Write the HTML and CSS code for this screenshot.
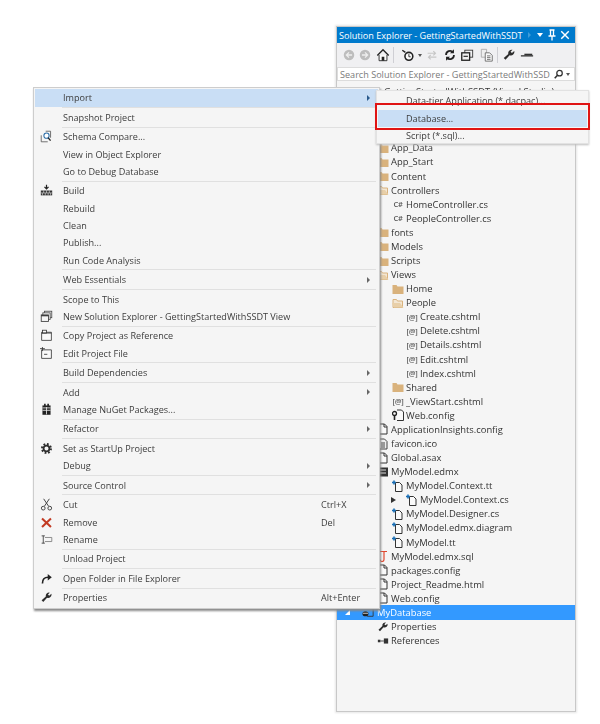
FILE: index.html
```html
<!DOCTYPE html>
<html lang="en">
<head>
<meta charset="utf-8">
<title>Import database into SSDT project</title>
<link rel="stylesheet" href="styles.css">
</head>
<body>
<svg class="sprite" xmlns="http://www.w3.org/2000/svg">
  <symbol id="page" viewBox="0 0 12 12"><path d="M2.500 1h5l2.500 2.500V11H2.500z" fill="#fafafa" stroke="#333"/><path d="M7 1v3h3" fill="none" stroke="#333"/></symbol>
  <symbol id="linked" viewBox="0 0 12 12"><path d="M3.500 2.500h4l2.500 2.500V11.500H3.500z" fill="#fafafa" stroke="#333"/><path d="M0 2.500h4M2 .5v4" stroke="#1b6fb5" stroke-width="1.600"/></symbol>
  <symbol id="folder" viewBox="0 0 12 12"><path d="M.5 2h4l1 1.500h6V11H.5z" fill="#d9b27c"/></symbol>
  <symbol id="open" viewBox="0 0 12 12"><path d="M1 2.500h3.500l1 1.500H10.500V10.500H1z" fill="#f3e6d2" stroke="#d9b27c"/><path d="M0 6h8l3.500 4.500H2z" fill="#e8cfa8"/></symbol>
  <symbol id="webcfg" viewBox="0 0 12 12"><path d="M5 1h4.500l2 2v8.500H5" fill="#fafafa" stroke="#333"/><circle cx="2.500" cy="4.500" r="2" fill="none" stroke="#222" stroke-width="1.300"/><path d="M2.500 6v5" stroke="#222" stroke-width="1.600"/></symbol>
  <symbol id="sql" viewBox="0 0 12 12"><path d="M2 1.500h8M7 1.500v8a2 2 0 0 1-4 0" fill="none" stroke="#e0472e" stroke-width="1.200"/></symbol>
  <symbol id="ico" viewBox="0 0 12 12"><path d="M2.500 1h5l2.500 2.500V11H2.500z" fill="#eee" stroke="#444"/><path d="M4 5h4M4 7h4M4 9h4" stroke="#444"/></symbol>
  <symbol id="edmx" viewBox="0 0 12 12"><rect x="1" y="1.500" width="10" height="9" fill="#333"/><path d="M3 4h6M3 7h6" stroke="#ddd"/></symbol>
  <symbol id="db" viewBox="0 0 14 12"><path d="M4 1h9v10H6" fill="none" stroke="#333"/><ellipse cx="4" cy="8" rx="3.500" ry="3" fill="#222"/><path d="M1 7.500h6" stroke="#ddd"/></symbol>
  <symbol id="refs" viewBox="0 0 14 12"><rect x="1" y="4.500" width="3" height="3" fill="#333"/><path d="M4 6h4" stroke="#333"/><rect x="8" y="3" width="5" height="6" fill="#333"/></symbol>
  <symbol id="wrench" viewBox="0 0 16 16"><path d="M14 3.500a4 4 0 0 1-5.300 4.800L4 13.500 2 11.500l5.200-4.700A4 4 0 0 1 12 2L9.800 4.300l1.500 1.500z" fill="#2d2d2d"/></symbol>
  <symbol id="compare" viewBox="0 0 16 16"><path d="M7 1.500h6v8M1.500 6.500v8h8" fill="none" stroke="#555"/><circle cx="8" cy="7" r="3.200" fill="#fff" stroke="#2d6ea8" stroke-width="1.300"/><path d="M10 9.500l3 3.500" stroke="#222" stroke-width="1.600"/></symbol>
  <symbol id="build" viewBox="0 0 16 16"><path d="M8 1v4M5.500 3.500L8 6l2.500-2.500" fill="none" stroke="#222" stroke-width="1.500"/><path d="M1 8h14v6H1z" fill="#333"/><path d="M1 11h14M4.500 8v3M8 8v3M11.500 8v3M3 11v3M6.500 11v3M10 11v3M13 11v3" stroke="#eee" stroke-width=".7"/></symbol>
  <symbol id="stack" viewBox="0 0 16 16"><rect x="5.500" y="1.500" width="9" height="8" fill="none" stroke="#444"/><rect x="3.500" y="3.500" width="9" height="8" fill="#f5f5f5" stroke="#444"/><rect x="1.500" y="6" width="9" height="8" fill="#f5f5f5" stroke="#333"/><path d="M1.500 7h9" stroke="#333" stroke-width="1.500"/></symbol>
  <symbol id="copyref" viewBox="0 0 16 16"><path d="M2 4h12v10H2z" fill="#fafafa" stroke="#333"/><rect x="3" y="1.500" width="5" height="3.500" fill="#fafafa" stroke="#333"/><path d="M2 5h12" stroke="#333"/></symbol>
  <symbol id="editfile" viewBox="0 0 16 16"><path d="M2 3.500h12V14H2z" fill="#fafafa" stroke="#333"/><path d="M0 2h6M3 0v5" stroke="#333"/><path d="M5 9h4" stroke="#333"/></symbol>
  <symbol id="nuget" viewBox="0 0 16 16"><path d="M3 3h10v11.500H3z" fill="#222"/><path d="M5 1h2v3H5zM9 1h2v3H9z" fill="#222"/><path d="M3 9h10M8 5v9M3 6h10" stroke="#eee"/></symbol>
  <symbol id="gear" viewBox="0 0 16 16"><circle cx="8" cy="8" r="5.500" fill="none" stroke="#2d2d2d" stroke-width="2.500" stroke-dasharray="2.200 2.100"/><circle cx="8" cy="8" r="3.600" fill="none" stroke="#2d2d2d" stroke-width="2.200"/></symbol>
  <symbol id="cut" viewBox="0 0 16 16"><path d="M4.500 1l6 9M11.500 1l-6 9" stroke="#444" stroke-width="1.200"/><circle cx="4" cy="12.500" r="2.300" fill="none" stroke="#444" stroke-width="1.200"/><circle cx="12" cy="12.500" r="2.300" fill="none" stroke="#444" stroke-width="1.200"/></symbol>
  <symbol id="remove" viewBox="0 0 16 16"><path d="M2.500 3l11 10.500M13.500 3l-11 10.500" stroke="#c23a22" stroke-width="2.500"/></symbol>
  <symbol id="rename" viewBox="0 0 16 16"><path d="M2 3.500h4M2 12.500h4M4 3.500v9" stroke="#333"/><path d="M6 5.500h8.500v5H6" fill="none" stroke="#777"/></symbol>
  <symbol id="openf" viewBox="0 0 16 16"><path d="M3 14c0-5 2.500-7.500 7-7.500" fill="none" stroke="#222" stroke-width="2"/><path d="M9.500 2.500l5 4-5 4z" fill="#222"/></symbol>
  <symbol id="back" viewBox="0 0 16 16"><circle cx="8" cy="8" r="6" fill="#bdbdbd"/><path d="M11.500 8h-6M8 5L5 8l3 3" fill="none" stroke="#eee" stroke-width="1.500"/></symbol>
  <symbol id="forward" viewBox="0 0 16 16"><circle cx="8" cy="8" r="6" fill="#bdbdbd"/><path d="M4.500 8h6M8 5l3 3-3 3" fill="none" stroke="#eee" stroke-width="1.500"/></symbol>
  <symbol id="home" viewBox="0 0 16 16"><path d="M1.500 8.500L8 2l6.500 6.500" fill="none" stroke="#222" stroke-width="1.500"/><path d="M3.500 8v6.500h9V8" fill="#fafafa" stroke="#222"/><rect x="6.500" y="10" width="3" height="4.500" fill="#222"/></symbol>
  <symbol id="history" viewBox="0 0 16 16"><circle cx="9" cy="9.500" r="4.500" fill="#fafafa" stroke="#222" stroke-width="1.800"/><path d="M9 7v3h2" fill="none" stroke="#222"/><path d="M1.500 2.500L5 5" stroke="#222" stroke-width="1.500"/></symbol>
  <symbol id="sync" viewBox="0 0 16 16"><path d="M3 6h9M9.500 3.500L12 6 9.500 8.500M13 10.500H4M6.500 8L4 10.500 6.500 13" fill="none" stroke="#c6c6c6" stroke-width="1.300"/></symbol>
  <symbol id="refresh" viewBox="0 0 16 16"><path d="M3.500 8a4.500 4.500 0 0 1 8-3M12.500 8a4.500 4.500 0 0 1-8 3" fill="none" stroke="#222" stroke-width="2"/><path d="M12.500 1.500v4.500H8zM3.500 14.500V10H8z" fill="#222"/></symbol>
  <symbol id="collapse" viewBox="0 0 16 16"><rect x="5.500" y="2.500" width="9" height="8" fill="none" stroke="#333"/><rect x="2" y="5.500" width="9" height="8.500" fill="#f0f0f0" stroke="#222" stroke-width="1.500"/><path d="M4 9.500h5" stroke="#222" stroke-width="1.300"/></symbol>
  <symbol id="showall" viewBox="0 0 16 16"><path d="M1.500 1.500h6v9h-6z" fill="#eee" stroke="#aaa"/><path d="M6 5.500h5l3 3v6.500H6z" fill="#fafafa" stroke="#666"/><path d="M8 9h4M8 11h4M8 13h4" stroke="#666"/></symbol>
  <symbol id="dash" viewBox="0 0 16 16"><path d="M1 9h14" stroke="#333" stroke-width="1.500"/><rect x="5" y="6.500" width="9" height="2" fill="#333"/></symbol>
  <symbol id="search" viewBox="0 0 16 16"><circle cx="9.500" cy="6" r="4" fill="none" stroke="#333" stroke-width="1.800"/><path d="M6.500 9l-4 4.500" stroke="#333" stroke-width="2.200"/></symbol>
  <symbol id="pin" viewBox="0 0 12 12"><path d="M3.500 1h5M4.500 1v5.500M7.500 1v5.500M2.500 7h7M6 7v4.500" fill="none" stroke="#fff" stroke-width="1.300"/></symbol>
  <symbol id="close" viewBox="0 0 12 12"><path d="M1.500 1.500l9 9M10.500 1.500l-9 9" stroke="#fff" stroke-width="1.700"/></symbol>
</svg>

<main class="stage">
  <section class="panel">
    <header class="title">
      <span class="title-text">Solution Explorer - GettingStartedWithSSDT</span>
      <i class="tri-faded"></i>
      <i class="tri-down white"></i>
      <svg class="title-pin"><use href="#pin"/></svg>
      <svg class="title-close"><use href="#close"/></svg>
    </header>
    <div class="toolbar">
      <svg class="tb"><use href="#back"/></svg>
      <svg class="tb"><use href="#forward"/></svg>
      <svg class="tb gap2"><use href="#home"/></svg>
      <i class="tb-sep"></i>
      <svg class="tb gap6"><use href="#history"/></svg>
      <i class="tri-down small"></i>
      <svg class="tb gap2"><use href="#sync"/></svg>
      <svg class="tb gap2"><use href="#refresh"/></svg>
      <svg class="tb gap1"><use href="#collapse"/></svg>
      <svg class="tb gap4"><use href="#showall"/></svg>
      <i class="tb-sep"></i>
      <svg class="tb gap3"><use href="#wrench"/></svg>
      <svg class="tb gap2"><use href="#dash"/></svg>
    </div>
    <div class="search">
      <span class="search-text">Search Solution Explorer - GettingStartedWithSSD</span>
      <svg class="search-icon"><use href="#search"/></svg>
      <i class="tri-down small"></i>
    </div>
    <ul class="tree">
      <li class="row l0 clipped"><span>GettingStartedWithSSDT (Visual Studio)</span></li>
      <li class="spacer"></li>
      <li class="row l0"><svg class="ti"><use href="#folder"/></svg><span>App_Data</span></li>
      <li class="row l0"><svg class="ti"><use href="#folder"/></svg><span>App_Start</span></li>
      <li class="row l0"><svg class="ti"><use href="#folder"/></svg><span>Content</span></li>
      <li class="row l0"><svg class="ti"><use href="#open"/></svg><span>Controllers</span></li>
      <li class="row l1"><b class="tt cs">C#</b><span>HomeController.cs</span></li>
      <li class="row l1"><b class="tt cs">C#</b><span>PeopleController.cs</span></li>
      <li class="row l0"><svg class="ti"><use href="#folder"/></svg><span>fonts</span></li>
      <li class="row l0"><svg class="ti"><use href="#folder"/></svg><span>Models</span></li>
      <li class="row l0"><svg class="ti"><use href="#folder"/></svg><span>Scripts</span></li>
      <li class="row l0"><svg class="ti"><use href="#open"/></svg><span>Views</span></li>
      <li class="row l1"><svg class="ti"><use href="#folder"/></svg><span>Home</span></li>
      <li class="row l1"><svg class="ti"><use href="#open"/></svg><span>People</span></li>
      <li class="row l2"><b class="tt">[@]</b><span>Create.cshtml</span></li>
      <li class="row l2"><b class="tt">[@]</b><span>Delete.cshtml</span></li>
      <li class="row l2"><b class="tt">[@]</b><span>Details.cshtml</span></li>
      <li class="row l2"><b class="tt">[@]</b><span>Edit.cshtml</span></li>
      <li class="row l2"><b class="tt">[@]</b><span>Index.cshtml</span></li>
      <li class="row l1"><svg class="ti"><use href="#folder"/></svg><span>Shared</span></li>
      <li class="row l1"><b class="tt">[@]</b><span>_ViewStart.cshtml</span></li>
      <li class="row l1"><svg class="ti"><use href="#webcfg"/></svg><span>Web.config</span></li>
      <li class="row l0"><svg class="ti"><use href="#page"/></svg><span>ApplicationInsights.config</span></li>
      <li class="row l0"><svg class="ti"><use href="#ico"/></svg><span>favicon.ico</span></li>
      <li class="row l0"><svg class="ti"><use href="#page"/></svg><span>Global.asax</span></li>
      <li class="row l0"><svg class="ti"><use href="#edmx"/></svg><span>MyModel.edmx</span></li>
      <li class="row l1"><svg class="ti"><use href="#linked"/></svg><span>MyModel.Context.tt</span></li>
      <li class="row l2"><i class="expander"></i><svg class="ti"><use href="#linked"/></svg><span>MyModel.Context.cs</span></li>
      <li class="row l1"><svg class="ti"><use href="#linked"/></svg><span>MyModel.Designer.cs</span></li>
      <li class="row l1"><svg class="ti"><use href="#linked"/></svg><span>MyModel.edmx.diagram</span></li>
      <li class="row l1"><svg class="ti"><use href="#linked"/></svg><span>MyModel.tt</span></li>
      <li class="row l0"><svg class="ti"><use href="#sql"/></svg><span>MyModel.edmx.sql</span></li>
      <li class="row l0"><svg class="ti"><use href="#page"/></svg><span>packages.config</span></li>
      <li class="row l0"><svg class="ti"><use href="#page"/></svg><span>Project_Readme.html</span></li>
      <li class="row l0"><svg class="ti"><use href="#page"/></svg><span>Web.config</span></li>
      <li class="row project selected"><i class="collapser"></i><svg class="ti wide"><use href="#db"/></svg><span>MyDatabase</span></li>
      <li class="row l0"><svg class="ti"><use href="#wrench"/></svg><span>Properties</span></li>
      <li class="row l0"><svg class="ti"><use href="#refs"/></svg><span>References</span></li>
    </ul>
  </section>

  <nav class="menu context">
    <div class="item active"><span class="label">Import</span><i class="arrow dark"></i></div>
    <i class="sep"></i>
    <div class="item"><span class="label">Snapshot Project</span></div>
    <i class="sep"></i>
    <div class="item"><svg class="mi"><use href="#compare"/></svg><span class="label">Schema Compare...</span></div>
    <div class="item"><span class="label">View in Object Explorer</span></div>
    <div class="item"><span class="label">Go to Debug Database</span></div>
    <i class="sep"></i>
    <div class="item"><svg class="mi"><use href="#build"/></svg><span class="label">Build</span></div>
    <div class="item"><span class="label">Rebuild</span></div>
    <div class="item"><span class="label">Clean</span></div>
    <div class="item"><span class="label">Publish...</span></div>
    <div class="item"><span class="label">Run Code Analysis</span></div>
    <i class="sep"></i>
    <div class="item"><span class="label">Web Essentials</span><i class="arrow"></i></div>
    <i class="sep"></i>
    <div class="item"><span class="label">Scope to This</span></div>
    <div class="item"><svg class="mi"><use href="#stack"/></svg><span class="label">New Solution Explorer - GettingStartedWithSSDT View</span></div>
    <i class="sep"></i>
    <div class="item"><svg class="mi"><use href="#copyref"/></svg><span class="label">Copy Project as Reference</span></div>
    <div class="item"><svg class="mi"><use href="#editfile"/></svg><span class="label">Edit Project File</span></div>
    <i class="sep"></i>
    <div class="item"><span class="label">Build Dependencies</span><i class="arrow"></i></div>
    <i class="sep"></i>
    <div class="item"><span class="label">Add</span><i class="arrow"></i></div>
    <div class="item"><svg class="mi"><use href="#nuget"/></svg><span class="label">Manage NuGet Packages...</span></div>
    <i class="sep"></i>
    <div class="item"><span class="label">Refactor</span><i class="arrow"></i></div>
    <i class="sep"></i>
    <div class="item"><svg class="mi"><use href="#gear"/></svg><span class="label">Set as StartUp Project</span></div>
    <div class="item"><span class="label">Debug</span><i class="arrow"></i></div>
    <i class="sep"></i>
    <div class="item"><span class="label">Source Control</span><i class="arrow"></i></div>
    <i class="sep"></i>
    <div class="item"><svg class="mi"><use href="#cut"/></svg><span class="label">Cut</span><span class="shortcut">Ctrl+X</span></div>
    <div class="item"><svg class="mi"><use href="#remove"/></svg><span class="label">Remove</span><span class="shortcut">Del</span></div>
    <div class="item"><svg class="mi"><use href="#rename"/></svg><span class="label">Rename</span></div>
    <i class="sep"></i>
    <div class="item"><span class="label">Unload Project</span></div>
    <i class="sep"></i>
    <div class="item"><svg class="mi"><use href="#openf"/></svg><span class="label">Open Folder in File Explorer</span></div>
    <i class="sep"></i>
    <div class="item"><svg class="mi"><use href="#wrench"/></svg><span class="label">Properties</span><span class="shortcut">Alt+Enter</span></div>
  </nav>

  <nav class="menu submenu">
    <div class="sub-item"><span>Data-tier Application (*.dacpac)...</span></div>
    <div class="sub-item active"><span>Database...</span></div>
    <div class="sub-item"><span>Script (*.sql)...</span></div>
  </nav>
  <div class="callout"></div>
</main>
</body>
</html>
```

FILE: styles.css
```css
* { box-sizing: border-box; }
html, body { margin: 0; padding: 0; background: #fff; }
body { font-family: "Open Sans", "Noto Sans", sans-serif; font-size: 9.100px; color: #3c3c3c; }
.sprite { position: absolute; width: 0; height: 0; }
i { display: block; font-style: normal; }

.stage { position: relative; width: 600px; height: 724px; overflow: hidden; filter: blur(.35px); }

/* Solution Explorer window */
.panel { position: absolute; left: 336px; top: 26px; width: 240px; height: 686px; background: #f5f5f5; border: 1px solid #c8c8c8; box-shadow: 0 0 2px 1px #e6e6e6; display: flex; flex-direction: column; }
.title { height: 16px; flex: none; background: #007acc; color: #fff; display: flex; align-items: center; padding-left: 2px; font-size: 9.100px; }
.title-text { width: 189px; flex: none; white-space: nowrap; }
.tri-faded { width: 0; height: 0; border-left: 3px solid #3d9bd9; border-top: 3px solid transparent; border-bottom: 3px solid transparent; }
.tri-down { width: 0; height: 0; border-left: 3.500px solid transparent; border-right: 3.500px solid transparent; border-top: 4px solid #333; }
.tri-down.white { border-top-color: #fff; margin-left: 5.500px; }
.tri-down.small { border-left-width: 2.500px; border-right-width: 2.500px; border-top-width: 3px; border-top-color: #555; margin-left: 2px; }
.title-pin { width: 12px; height: 12px; margin-left: 3.500px; }
.title-close { width: 10px; height: 10px; margin-left: 2px; }

.toolbar { height: 24px; flex: none; background: #f0f0f2; display: flex; align-items: center; padding-left: 4px; }
.tb { width: 14px; height: 14px; flex: none; margin: 0 1px; }
.tb.gap1 { margin-left: 2px; }
.tb.gap2 { margin-left: 3px; }
.tb.gap3 { margin-left: 4px; }
.tb.gap4 { margin-left: 5px; }
.tb.gap6 { margin-left: 7px; }
.tb-sep { width: 1px; height: 16px; margin-left: 2px; background: #cfcfd4; }

.search { height: 14px; flex: none; background: #fff; border: 1px solid #dcdcdc; display: flex; align-items: center; padding-left: 2px; color: #7a7a7a; font-size: 9.100px; }
.search-text { width: 213px; flex: none; white-space: nowrap; }
.search-icon { width: 11px; height: 11px; }

.tree { list-style: none; margin: 0; padding: 3.500px 0 0; flex: 1; overflow: hidden; }
.row { height: 14.090px; display: flex; align-items: center; white-space: nowrap; color: #333; font-size: 9.400px; }
.l0 { padding-left: 40px; }
.l1 { padding-left: 55px; }
.l2 { padding-left: 69px; }
.project { padding-left: 8px; }
.spacer { height: 42.270px; }
.clipped { padding-left: 47px; }
.ti { width: 12px; height: 12px; flex: none; margin-right: 2px; }
.ti.wide { margin-left: 12px; margin-right: 3px; }
.tt { width: 12px; flex: none; margin-right: 2px; font-size: 7.500px; font-weight: 600; color: #555; text-align: center; letter-spacing: -.2px; }
.selected { background: #3399ff; color: #fff; }
.expander { width: 0; height: 0; margin-left: -15px; margin-right: 10px; border-left: 5px solid #333; border-top: 3.500px solid transparent; border-bottom: 3.500px solid transparent; }
.collapser { width: 0; height: 0; margin-left: 0; border-right: 5px solid #fff; border-top: 5px solid transparent; }

/* Menus */
.menu { position: absolute; background: #f5f5f5; border: 1px solid #cdcdcd; }
.context { left: 33px; top: 87px; width: 347px; padding: 1.300px 1px; box-shadow: 1px 2px 2px #8a8a8a; }
.item { height: 17.300px; display: grid; grid-template-columns: 28px 1fr 44px 13px; align-items: center; white-space: nowrap; }
.mi { grid-column: 1; width: 13px; height: 13px; margin-left: 4.500px; }
.label { grid-column: 2; grid-row: 1; }
.shortcut { grid-column: 3; grid-row: 1; }
.arrow { grid-column: 4; grid-row: 1; width: 0; height: 0; margin-left: 2px; border-left: 3.500px solid #666; border-top: 3px solid transparent; border-bottom: 3px solid transparent; }
.arrow.dark { border-left-color: #2a5a8c; }
.active { background: #c9def5; }
.sep { height: 1px; margin: .6px 2px .6px 27px; background: #e0e0e0; }

.submenu { left: 376px; top: 90px; width: 213px; height: 54px; padding: 1px; box-shadow: 0 1px 2px #bdbdbd; border-color: #e2e2e2; z-index: 2; }
.sub-item { height: 17.500px; display: flex; align-items: center; padding-left: 28px; white-space: nowrap; }
.callout { position: absolute; left: 375px; top: 103px; width: 215px; height: 27px; border: 2px solid #e01414; z-index: 3; }
```
